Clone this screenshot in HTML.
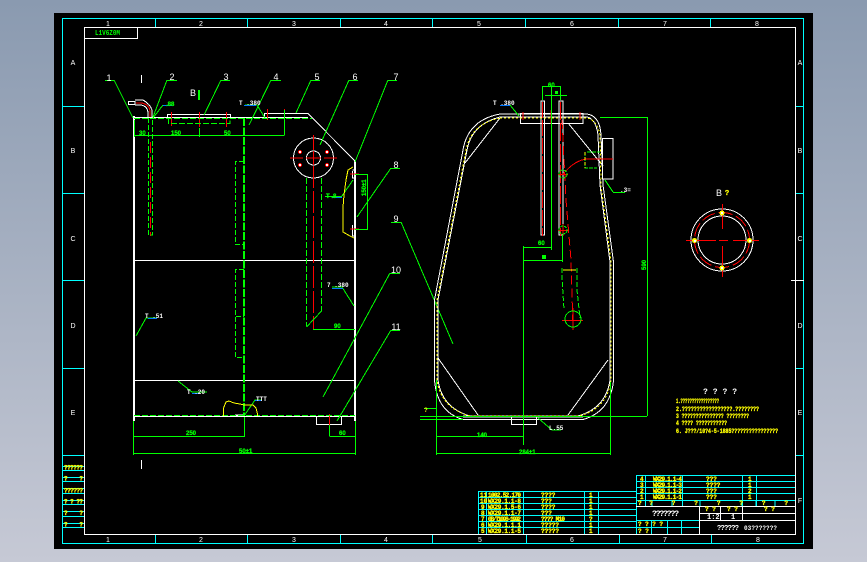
<!DOCTYPE html>
<html><head><meta charset="utf-8"><style>
html,body{margin:0;padding:0;width:867px;height:562px;overflow:hidden;background:linear-gradient(#8a9ab0,#c6c9d5)}
svg{position:absolute;left:0;top:0;display:block}
text{font-family:"Liberation Sans",sans-serif;font-size:8px}
.m{font-family:"Liberation Mono",monospace;font-size:7px;font-weight:bold}
.w{fill:#fff}.y{fill:#ff0;font-weight:bold;stroke:#ff0;stroke-width:.3}.g{fill:#0f0;font-weight:bold}
.s{font-size:7px;text-anchor:middle}
.gt text{fill:#0f0;font-size:6px;font-weight:bold;stroke:#0f0;stroke-width:.25}
</style></head><body>
<svg width="867" height="562" viewBox="0 0 867 562" shape-rendering="crispEdges" fill="none">
<rect x="54" y="13" width="759" height="536" fill="#000"/>
<!-- frames -->
<g stroke="#0ff" stroke-width="1">
<rect x="62.5" y="18.5" width="741" height="525"/>
<path d="M62 106.5H84M62 193.5H84M62 280.5H84M62 368.5H84M62 455.5H84"/>
<path d="M795 106.5H804M795 193.5H804M795 368.5H804M795 455.5H804"/>
<path d="M155.5 18V27M247.5 18V27M340.5 18V27M432.5 18V27M525.5 18V27M618.5 18V27M710.5 18V27"/>
<path d="M155.5 534V543M247.5 534V543M340.5 534V543M432.5 534V543M526.5 534V543M619.5 534V543M711.5 534V543"/>
<path d="M62 466.5H84M62 470.5H84M62 477.5H84M62 481.5H84M62 488.5H84M62 493.5H84M62 500.5H84M62 504.5H84M62 511.5H84M62 516.5H84M62 523.5H84M62 527.5H84"/>
<!-- parts table -->
<path d="M478 491.5H636M478 497.5H636M478 503.5H636M478 509.5H636M478 515.5H636M478 521.5H636M478 527.5H636"/>
<path d="M478.5 491V534M486.5 491V534M523.5 491V534M584.5 491V534M598.5 491V534"/>
<path d="M636 475.5H795M636 481.5H795M636 487.5H795M636 493.5H795M636 500.5H795"/>
<path d="M636.5 475V534M645.5 475V506M682.5 475V506M742.5 475V506M756.5 475V506"/>
<path d="M636 520.5H699M636 527.5H699M651.5 520V534M667.5 520V534M681.5 520V534M652 500V506M672 500V506M700 500V506M742 500V506M756 500V506M775 500V506"/>
</g>
<g stroke="#fff" stroke-width="1">
<rect x="84.5" y="27.5" width="711" height="507"/>
<path d="M85 38.5H137.5V28M791 280.5H804"/>
<path d="M636 506.5H795M699 513.5H795M699 520.5H795M699.5 506V534M720.5 506V520M742.5 506V520"/>
</g>
<g class="w" text-anchor="middle" fill="#fff">
<text x="108" y="26" class="s w">1</text><text x="201" y="26" class="s w">2</text><text x="294" y="26" class="s w">3</text><text x="386" y="26" class="s w">4</text><text x="479" y="26" class="s w">5</text><text x="572" y="26" class="s w">6</text><text x="665" y="26" class="s w">7</text><text x="757" y="26" class="s w">8</text>
<text x="108" y="542" class="s w">1</text><text x="201" y="542" class="s w">2</text><text x="294" y="542" class="s w">3</text><text x="386" y="542" class="s w">4</text><text x="480" y="542" class="s w">5</text><text x="572" y="542" class="s w">6</text><text x="665" y="542" class="s w">7</text><text x="758" y="542" class="s w">8</text>
<text x="73" y="65" class="s w">A</text><text x="73" y="153" class="s w">B</text><text x="73" y="241" class="s w">C</text><text x="73" y="328" class="s w">D</text><text x="73" y="415" class="s w">E</text>
<text x="800" y="65" class="s w">A</text><text x="800" y="153" class="s w">B</text><text x="800" y="241" class="s w">C</text><text x="800" y="328" class="s w">D</text><text x="800" y="415" class="s w">E</text><text x="800" y="503" class="s w">F</text>
</g>
<text x="95" y="35" class="m" textLength="25" lengthAdjust="spacingAndGlyphs" style="fill:#0f0;font-size:7px">L1V6Z0M</text>

<!-- LEFT VIEW white -->
<g stroke="#fff">
<path d="M134 116V421M355 160V421" stroke-width="2"/>
<path d="M134 117.5H167M231 117.5H264M167.5 117V114.5H230.5V117M264.5 117V113.5H308L355 161" stroke-width="1"/>
<path d="M134 117.5H308" stroke-width="1"/>
<path d="M134 260.5H355M134 380.5H355M134 416.5H355" stroke-width="1"/>
<path d="M316.5 417V424.5H341.5V417M141.5 75V83M141.5 460V469" stroke-width="1"/>
<path d="M128.5 101.5H135V104.5H128.5ZM135 100H143Q150 104 152 110V117M135 105H141Q147 106 148 112V117" stroke-width="1"/>
<circle cx="313.5" cy="158" r="20"/><circle cx="313.5" cy="158" r="7"/>
<path d="M352.5 170H355M352.5 171V178H355M352.5 225V236H355" stroke-width="1"/>
<path d="M235 415.5H245" stroke-width="2"/>
</g>
<g stroke="#f00">
<path d="M136 103H142Q150 105 150 112V117" stroke-width="1"/>
<path d="M171.5 112V126M199.5 112V127M226.5 112V127M267.5 109V120M284.5 109V135"/>
<path d="M150.5 142V236" stroke-dasharray="11 4"/>
<path d="M313.5 135V150M313.5 166V330" stroke-dasharray="22 3"/>
<path d="M290 158H303M324 158H337M313.5 151V165M306 158H321"/>
<path d="M350 174H359M350 229H359M329.5 414V436"/>
</g>
<g fill="#f00"><circle cx="300" cy="152" r="2"/><circle cx="327" cy="152" r="2"/><circle cx="300" cy="165" r="2"/><circle cx="327" cy="165" r="2"/></g>
<g fill="#fff"><rect x="299" y="151" width="2" height="2"/><rect x="326" y="151" width="2" height="2"/><rect x="299" y="164" width="2" height="2"/><rect x="326" y="164" width="2" height="2"/></g>
<!-- green -->
<g stroke="#0f0">
<path d="M134 118.5H312M134 415.5H355" stroke-dasharray="6 2" stroke-width="1"/>
<path d="M244 118V416" stroke-width="2" stroke-dasharray="8 1.5"/>
<path d="M148.5 118V235H152.5V118" stroke-dasharray="5 2"/>
<path d="M168.5 118V123.5H230V118" stroke-dasharray="6 2"/>
<path d="M244 161.5H235.5V244.5H244M244 269.5H235.5V316.5H244M235.5 317V357.5H244" stroke-dasharray="5 2"/>
<path d="M306.5 178V326M321.5 178V311" stroke-dasharray="6 2"/>
<path d="M321.5 311L306.5 327M313 329.5H355"/>
<path d="M134.5 135.5H284.5M284.5 110V135M134.5 120V137M199.5 128V137"/>
<path d="M133.5 421V455M355.5 421V455M134 453.5H355M134 436.5H244M244.5 417V437M329.5 425V436M329.5 436.5H355"/>
<path d="M355 174.5H367.5V229.5H355"/>
<!-- leaders -->
<path d="M105 80.5H114M114 80L133 118M167 80.5H177M167 80L153 117M221 80.5H230M221 80L204 115M271 80.5H281M271 80L249 125M311 80.5H320M311 80L296 113M349 80.5H358M349 80L320 145M388 80.5H397M388 80L355 162M391 168.5H400M391 168L357 217M391 222.5H401M401 222L453 344M390 273.5H400M390 273L323 397M391 330.5H400M391 330L337 421"/>
<path d="M163 105L153 118M245 105H257M257 105L265 118M353 180L342 196M325 196.5H342M136 336L146 318H157M178 381L192 392H207M244 416L255 400H262M332 287H342L354 306"/>
</g>
<g stroke="#07f"><path d="M163 105.5H172M244 105.5H256M332 197.5H342M332 288.5H343M148 318.5H157M192 393.5H200M255 400.5H262"/></g>
<g stroke="#ff0" fill="none"><path d="M353 167L348 170L346 180L344 195L343 207V232L350 236L354 238"/>
<path d="M223.5 416V408L226 402L229 401L234 403L240 404L244 405H253L256 408L257.5 414V416"/></g>
<g class="w" fill="#fff">
<text x="109" y="81" class="s w" style="font-size:9px">1</text><text x="172" y="80" class="s w" style="font-size:9px">2</text><text x="226" y="80" class="s w" style="font-size:9px">3</text><text x="276" y="80" class="s w" style="font-size:9px">4</text><text x="317" y="80" class="s w" style="font-size:9px">5</text><text x="355" y="80" class="s w" style="font-size:9px">6</text><text x="396" y="80" class="s w" style="font-size:9px">7</text>
<text x="396" y="168" class="s w" style="font-size:9px">8</text><text x="396" y="222" class="s w" style="font-size:9px">9</text><text x="396" y="273" class="s w" style="font-size:9px">10</text><text x="396" y="330" class="s w" style="font-size:9px">11</text>
<text x="193" y="96" class="s w" style="font-size:9px">B</text>
<text x="239" y="105" class="m w" style="font-size:6px">T .380</text><text x="145" y="318" class="m w" style="font-size:6px">T .51</text><text x="327" y="287" class="m w" style="font-size:6px">7 .380</text><text x="187" y="394" class="m w" style="font-size:6px">T .20</text><text x="256" y="401" class="m w" style="font-size:6px">TTT</text>
</g>
<rect x="198" y="90" width="2" height="10" fill="#0f0"/>
<g class="gt"><text x="166" y="106">.88</text><text x="139" y="135">30</text><text x="171" y="135">150</text><text x="224" y="135">50</text><text x="186" y="435">250</text><text x="339" y="435">60</text><text x="239" y="453">50±1</text><text x="334" y="328">90</text><text x="326" y="198">T .8</text><text transform="translate(366,196) rotate(-90)">150±1</text></g>

<!-- RIGHT VIEW -->
<g stroke="#fff">
<path d="M500 114H587Q600 116 601 135L603 185L613.5 262V381Q610 412 583 419.5H463Q437 412 434.5 380V300L463 150Q468 120 500 114Z"/>
<path d="M500 117H587Q596 119 598 135L600 185L610 262V380Q606 408 578 416H470Q442 408 438 380V300L467 150Q472 124 500 117Z"/>
<rect x="520.5" y="113.5" width="62.5" height="10"/>
<rect x="602.5" y="138.5" width="10.5" height="40.5"/>
<rect x="541" y="101" width="3.5" height="134" stroke-width="1"/><rect x="559" y="101" width="4" height="134" stroke-width="1"/>
<path d="M500 118L465 163M568 123L603 166M438 358L478 415M608 360L568 415"/>
<rect x="511.5" y="416.5" width="25" height="8"/>
<path d="M463 416.5H583" stroke-width="2"/>
</g>
<g stroke="#ff0" stroke-dasharray="2 2">
<path d="M500 118H587Q597 120 600 135L601 185L611 262V380Q607 410 578 416H470Q441 408 437 380V300L466 150Q471 124 500 118Z"/>
</g>
<g stroke="#f00">
<path d="M542.5 102V236" stroke-dasharray="16 2"/><path d="M560.5 102V236" stroke-dasharray="18 3"/>
<path d="M523 112V120M551 110V124M580 112V120"/>
<path d="M562 120L566 200L571 260L573 328" stroke-dasharray="9 4"/>
<path d="M563 174Q575 160 587 159H613"/>
<path d="M558 174.5H568M558 230.5H568M563 224V236M562 320.5H583M573 308V330M523.5 414V424"/>
</g>
<g stroke="#0f0">
<circle cx="563" cy="174" r="4" stroke-dasharray="3 1"/><circle cx="563" cy="230" r="4" stroke-dasharray="3 1"/>
<circle cx="573" cy="319" r="8"/>
<path d="M542 86.5H560M542.5 86V100M560.5 86V100M551.5 86V250M545 95.5H567M523.5 246V445M523 247.5H551M523 260.5H562M562.5 235V262"/>
<path d="M587 152H600M585 152V168H597" stroke-dasharray="4 1"/>
<path d="M562 268V278L564 310M577 268V290L580 318" stroke-dasharray="5 2"/>
<path d="M600 117.5H647M647.5 117V416M420 416.5H647M420 419.5H463"/>
<path d="M436.5 380V455M610.5 382V455M436 453.5H610M436 436.5H523M424 408.5H436"/>
<path d="M510 105L519 116M605 180L613 192M613 192.5H625M538 418L552 430H561"/>
</g>
<path d="M563 270H576" stroke="#ff0"/>
<path d="M585 152V168" stroke="#ff0" stroke-dasharray="3 2"/>
<rect x="542" y="255" width="4" height="4" fill="#0f0"/>
<path d="M500 105.5H510" stroke="#07f"/>
<rect x="555" y="91" width="3" height="3" fill="#0f0"/>
<g><text x="493" y="105" class="m w" style="font-size:6px">T .380</text><text x="620" y="192" class="m w" style="font-size:6px">.3=</text><text x="549" y="430" class="m w" style="font-size:6px">L.55</text></g>
<g class="gt"><text x="538" y="245">60</text><text x="477" y="437">140</text><text x="519" y="454">284±1</text><text x="548" y="87">60</text><text transform="translate(646,270) rotate(-90)">590</text></g>
<text x="424" y="412" style="fill:#ff0;font-size:6px;font-weight:bold">?</text>

<!-- RING -->
<g stroke="#fff"><circle cx="722" cy="240" r="31"/><circle cx="722" cy="240" r="24"/></g>
<g stroke="#f00"><circle cx="722" cy="240" r="27.5" stroke-dasharray="14 4"/><path d="M686 240.5H716M733 240.5H759M722.5 204V229M722.5 246V277M719 240.5H728"/></g>
<g fill="#ff0" stroke="#ff0"><circle cx="722" cy="213" r="2"/><circle cx="694.5" cy="240.5" r="2"/><circle cx="749.5" cy="240.5" r="2"/><circle cx="722" cy="268" r="2"/></g>
<g fill="#fff"><rect x="721" y="212" width="2" height="2"/><rect x="694" y="240" width="2" height="2"/><rect x="749" y="240" width="2" height="2"/><rect x="721" y="267" width="2" height="2"/></g>
<text x="719" y="196" class="s w" style="font-size:9px">B</text><text x="727" y="195" class="s y">?</text>

<!-- notes -->
<text x="703" y="394" class="m w" textLength="34" style="font-size:8px">? ? ? ?</text>
<g>
<text x="676" y="403" class="m y" textLength="43" lengthAdjust="spacingAndGlyphs" style="font-size:6px">1.?????????????????</text>
<text x="676" y="411" class="m y" textLength="83" lengthAdjust="spacingAndGlyphs" style="font-size:6px">2.?????????????????.????????</text>
<text x="676" y="418" class="m y" textLength="73" lengthAdjust="spacingAndGlyphs" style="font-size:6px">3 ???????????????  ????????</text>
<text x="676" y="425" class="m y" textLength="51" lengthAdjust="spacingAndGlyphs" style="font-size:6px">4 ???? ???????????</text>
<text x="676" y="433" class="m y" textLength="102" lengthAdjust="spacingAndGlyphs" style="font-size:6px">6. J???/10?4-5-1885????????????????</text>
</g>

<!-- parts table text -->
<g>
<text x="480" y="497" class="m y" style="font-size:6px">11</text><text x="488" y="497" class="m y" style="font-size:6px" textLength="33">1002.52.170</text><text x="541" y="497" class="m y" style="font-size:6px">????</text><text x="589" y="497" class="m y" style="font-size:6px">1</text>
<text x="480" y="503" class="m y" style="font-size:6px">10</text><text x="488" y="503" class="m y" style="font-size:6px" textLength="33">WX29.1.1-8</text><text x="541" y="503" class="m y" style="font-size:6px">???</text><text x="589" y="503" class="m y" style="font-size:6px">1</text>
<text x="481" y="509" class="m y" style="font-size:6px">9</text><text x="488" y="509" class="m y" style="font-size:6px" textLength="33">WX29.1.5-6</text><text x="541" y="509" class="m y" style="font-size:6px">????</text><text x="589" y="509" class="m y" style="font-size:6px">1</text>
<text x="481" y="515" class="m y" style="font-size:6px">8</text><text x="488" y="515" class="m y" style="font-size:6px" textLength="33">WX29.1.1-7</text><text x="541" y="515" class="m y" style="font-size:6px">???</text><text x="589" y="515" class="m y" style="font-size:6px">1</text>
<text x="481" y="521" class="m y" style="font-size:6px">7</text><text x="488" y="521" class="m y" style="font-size:6px" textLength="33">GB/T1096-1992</text><text x="541" y="521" class="m y" style="font-size:6px" textLength="24">???? M10</text><text x="589" y="521" class="m y" style="font-size:6px">?</text>
<text x="481" y="527" class="m y" style="font-size:6px">6</text><text x="488" y="527" class="m y" style="font-size:6px" textLength="33">WX29.1.1.1</text><text x="541" y="527" class="m y" style="font-size:6px">?????</text><text x="589" y="527" class="m y" style="font-size:6px">1</text>
<text x="481" y="533" class="m y" style="font-size:6px">5</text><text x="488" y="533" class="m y" style="font-size:6px" textLength="33">WX29.1.1-5</text><text x="541" y="533" class="m y" style="font-size:6px">?????</text><text x="589" y="533" class="m y" style="font-size:6px">1</text>
<text x="640" y="481" class="m y" style="font-size:6px">4</text><text x="653" y="481" class="m y" style="font-size:6px" textLength="29">WX29.1.1-4</text><text x="706" y="481" class="m y" style="font-size:6px">???</text><text x="748" y="481" class="m y" style="font-size:6px">1</text>
<text x="640" y="487" class="m y" style="font-size:6px">3</text><text x="653" y="487" class="m y" style="font-size:6px" textLength="29">WX29.1.1-3</text><text x="706" y="487" class="m y" style="font-size:6px">????</text><text x="748" y="487" class="m y" style="font-size:6px">1</text>
<text x="640" y="493" class="m y" style="font-size:6px">2</text><text x="653" y="493" class="m y" style="font-size:6px" textLength="29">WX29.1.1-2</text><text x="706" y="493" class="m y" style="font-size:6px">???</text><text x="748" y="493" class="m y" style="font-size:6px">2</text>
<text x="640" y="499" class="m y" style="font-size:6px">1</text><text x="653" y="499" class="m y" style="font-size:6px" textLength="29">WX29.1.1-1</text><text x="706" y="499" class="m y" style="font-size:6px">???</text><text x="748" y="499" class="m y" style="font-size:6px">1</text>
<text x="638" y="505" class="m y" textLength="150" style="font-size:6px">??  ?     ?      ?      ?  ?  ?</text>
<text x="705" y="511" class="m y" style="font-size:6px">? ?</text><text x="727" y="511" class="m y" style="font-size:6px">? ?</text><text x="764" y="511" class="m y" style="font-size:6px">? ?</text>
<text x="638" y="526" class="m y" textLength="25" style="font-size:6px">? ? ? ?</text><text x="638" y="533" class="m y" style="font-size:6px">? ?</text>
<text x="64" y="469.5" class="m y" textLength="19" style="font-size:6px">??????</text><text x="64" y="480.5" class="m y" textLength="19" style="font-size:6px">?    ?</text><text x="64" y="492.5" class="m y" textLength="19" style="font-size:6px">??????</text><text x="64" y="503.5" class="m y" textLength="19" style="font-size:6px">? ? ??</text><text x="64" y="515" class="m y" textLength="19" style="font-size:6px">?    ?</text><text x="64" y="526.5" class="m y" textLength="19" style="font-size:6px">?    ?</text>
</g>
<text x="652" y="516" class="m w" textLength="27" style="font-size:8px">???????</text>
<text x="707" y="519" class="m w" style="font-size:7px">1:2</text><text x="731" y="519" class="m w" style="font-size:7px">1</text>
<text x="717" y="530" class="m w" textLength="22" style="font-size:7px">??????</text><text x="744" y="530" class="m w" textLength="33" style="font-size:6px">03???????</text>
</svg>
</body></html>
